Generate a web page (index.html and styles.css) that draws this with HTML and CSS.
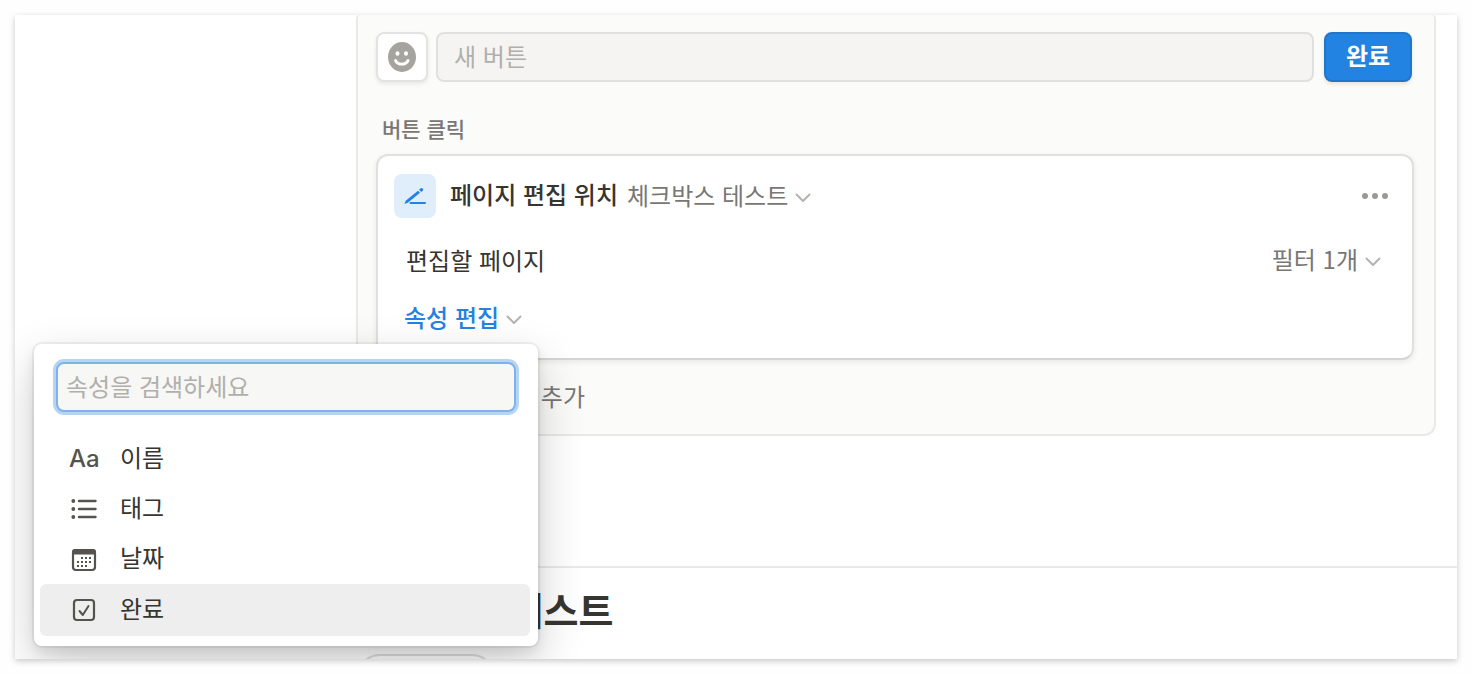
FILE: index.html
```html
<!DOCTYPE html>
<html lang="ko">
<head>
    <meta charset="UTF-8">
    <meta name="viewport" content="width=device-width, initial-scale=1.0">
    <title>체크박스 테스트</title>
    <link rel="stylesheet" href="styles.css">
</head>
<body>
    <div class="window">
        <main class="content">
            <section class="panel">
                <div class="name-row">
                    <button class="emoji-button" type="button" aria-label="아이콘">
                        <svg width="28" height="30" viewBox="0 0 28 30">
                            <ellipse cx="14" cy="15" rx="14" ry="15" fill="#a5a49f"/>
                            <ellipse cx="9.5" cy="11.5" rx="2" ry="2.3" fill="#fff"/>
                            <ellipse cx="18" cy="11.5" rx="2" ry="2.3" fill="#fff"/>
                            <path d="M7.500 18.500c1.500 3 3.700 3.700 6.300 3.700s4.800-.7 6.300-3.700" fill="none" stroke="#fff" stroke-width="2.800" stroke-linecap="round"/>
                        </svg>
                    </button>
                    <input class="name-input" type="text" placeholder="새 버튼" aria-label="버튼 이름">
                    <button class="done-button" type="button">완료</button>
                </div>

                <h2 class="label">버튼 클릭</h2>

                <div class="card">
                    <div class="card-row">
                        <span class="edit-icon">
                            <svg width="24" height="20" viewBox="0 0 24 20">
                                <path d="M1.500 18 2.700 14.800 15 4.800 17 6.800 4.800 16.800z" fill="#2383e2"/>
                                <path d="M16 3.800 17.500 2.500a1.600 1.600 0 0 1 2.300 2.200L18.200 6z" fill="#2383e2"/>
                                <path d="M7.500 17h14.500" stroke="#2383e2" stroke-width="2" stroke-linecap="round"/>
                            </svg>
                        </span>
                        <strong class="action-name">페이지 편집 위치</strong>
                        <button class="picker" type="button"><span>체크박스 테스트</span>
                            <svg class="chevron" width="16" height="10" viewBox="0 0 16 10"><path d="M1.500 1.500 8 8l6.500-6.500"/></svg>
                        </button>
                        <button class="more" type="button" aria-label="더 보기">
                            <svg width="26" height="6" viewBox="0 0 26 6" fill="#9b9a97">
                                <circle cx="3" cy="3" r="3"/><circle cx="13" cy="3" r="3"/><circle cx="23" cy="3" r="3"/>
                            </svg>
                        </button>
                    </div>
                    <div class="card-row pages-row">
                        <span>편집할 페이지</span>
                        <button class="picker filter" type="button"><span>필터 1개</span>
                            <svg class="chevron" width="16" height="10" viewBox="0 0 16 10"><path d="M1.500 1.500 8 8l6.500-6.500"/></svg>
                        </button>
                    </div>
                    <div class="card-row props-row">
                        <button class="picker props" type="button"><span>속성 편집</span>
                            <svg class="chevron" width="16" height="10" viewBox="0 0 16 10"><path d="M1.500 1.500 8 8l6.500-6.500"/></svg>
                        </button>
                    </div>
                </div>

                <button class="add-action" type="button">
                    <svg width="24" height="24" viewBox="0 0 24 24"><path d="M12 4v16M4 12h16" stroke="#787774" stroke-width="2"/></svg>
                    새로운 작업 추가
                </button>
            </section>

            <section class="database">
                <h1>체크박스 테스트</h1>
                <div class="tab"></div>
            </section>
        </main>

        <div class="menu">
            <input class="search" type="text" placeholder="속성을 검색하세요" aria-label="속성 검색">
            <ul class="menu-list">
                <li><button type="button">
                    <span class="menu-icon text-icon">Aa</span>
                    <span class="menu-text">이름</span>
                </button></li>
                <li><button type="button">
                    <svg class="menu-icon" width="30" height="28" viewBox="0 0 30 28">
                        <g fill="#55534e"><circle cx="4.300" cy="6" r="1.900"/><circle cx="4.300" cy="14" r="1.900"/><circle cx="4.300" cy="22" r="1.900"/></g>
                        <path d="M10 6h16.500M10 14h16.500M10 22h16.500" stroke="#55534e" stroke-width="2.400" stroke-linecap="round"/>
                    </svg>
                    <span class="menu-text">태그</span>
                </button></li>
                <li><button type="button">
                    <svg class="menu-icon" width="30" height="28" viewBox="0 0 30 28">
                        <rect x="4" y="5" width="22" height="20" rx="3" fill="none" stroke="#55534e" stroke-width="2.200"/>
                        <path d="M3 9.500V7a3 3 0 0 1 3-3h18a3 3 0 0 1 3 3v2.500z" fill="#55534e"/>
                        <path d="M12 13h10M8 17h14M8 21h10" stroke="#55534e" stroke-width="2" stroke-dasharray="2 2"/>
                    </svg>
                    <span class="menu-text">날짜</span>
                </button></li>
                <li><button class="active" type="button">
                    <svg class="menu-icon" width="30" height="28" viewBox="0 0 30 28" fill="none" stroke="#55534e" stroke-width="2.200">
                        <rect x="5" y="4" width="20" height="20" rx="3"/>
                        <path d="M10.500 15l3.300 4 5.700-9" stroke-width="2" stroke-linecap="round" stroke-linejoin="round"/>
                    </svg>
                    <span class="menu-text">완료</span>
                </button></li>
            </ul>
        </div>
    </div>
</body>
</html>
```
FILE: styles.css
```css
* {
    box-sizing: border-box;
}
body {
    margin: 0;
    padding: 15px;
    background-color: #fefefe;
    color: #37352f;
    font-family: "Noto Sans CJK KR", sans-serif;
    font-size: 24px;
    line-height: 36px;
}
button, input {
    font: inherit;
    color: inherit;
}
button {
    padding: 0;
    border: none;
    background: none;
    cursor: pointer;
}
.window {
    position: relative;
    height: calc(100vh - 30px);
    overflow: hidden;
    background-color: white;
    box-shadow: 0 2px 6px rgba(0, 0, 0, 0.22);
}
.content {
    padding-left: 341px;
}

/* Button editor */
.panel {
    margin-right: 21px;
    padding: 17px 20px 18px 18px;
    border: 2px solid #e9e9e7;
    border-top: none;
    border-radius: 4px 4px 12px 12px;
    background-color: #fbfbf9;
}
.name-row {
    display: flex;
    margin-right: 2px;
}
.emoji-button {
    display: flex;
    align-items: center;
    justify-content: center;
    width: 52px;
    height: 50px;
    margin-right: 8px;
    border: 2px solid #e3e3e1;
    border-radius: 8px;
    background-color: white;
    box-shadow: 0 2px 4px rgba(0, 0, 0, 0.08);
}
.name-input {
    flex: 1;
    min-width: 0;
    height: 50px;
    margin-right: 10px;
    padding: 0 16px 4px;
    border: 2px solid #e0e0de;
    border-radius: 8px;
    background-color: #f5f4f2;
}
input::placeholder {
    color: #b0afab;
    opacity: 1;
}
.done-button {
    width: 88px;
    height: 50px;
    padding-bottom: 4px;
    border: 2px solid #2076cb;
    border-radius: 8px;
    background-color: #2383e2;
    color: white;
    font-weight: 700;
    box-shadow: 0 2px 4px rgba(0, 0, 0, 0.1);
}
.label {
    margin: 30px 0 10px 6px;
    color: #787774;
    font-size: 21px;
    font-weight: 500;
    line-height: 32px;
}
.card {
    height: 206px;
    padding: 18px 24px 18px 16px;
    border: 2px solid #e0e0de;
    border-bottom-color: #d5d5d3;
    border-radius: 12px;
    background-color: white;
    box-shadow: 0 2px 6px rgba(0, 0, 0, 0.08);
}
.card-row {
    display: flex;
    align-items: center;
    height: 44px;
}
.edit-icon {
    display: flex;
    align-items: center;
    justify-content: center;
    width: 42px;
    height: 44px;
    margin-right: 14px;
    border-radius: 8px;
    background-color: #e0edfb;
}
.action-name {
    margin-right: 9px;
    padding-bottom: 4px;
    font-weight: 500;
}
.picker {
    display: flex;
    align-items: center;
    gap: 7px;
    color: #787774;
}
.picker span {
    padding-bottom: 2px;
}
.chevron {
    margin-top: 4px;
    fill: none;
    stroke: #b3b3b0;
    stroke-width: 2;
    stroke-linecap: round;
    stroke-linejoin: round;
}
.more {
    display: flex;
    margin-left: auto;
}
.pages-row {
    margin-top: 20px;
    padding: 0 7px 0 12px;
}
.filter {
    margin-left: auto;
}
.props-row {
    margin-top: 14px;
    padding-left: 10px;
}
.props {
    color: #2383e2;
    font-weight: 500;
}
.add-action {
    display: flex;
    align-items: center;
    gap: 8px;
    margin: 18px 0 2px 9px;
    color: #787774;
}

/* Database below the button */
.database {
    margin-top: 130px;
    border-top: 2px solid #e9e9e7;
}
.database h1 {
    margin: 0 0 0 2px;
    padding: 12px 0 16px;
    font-size: 38px;
    font-weight: 700;
    line-height: 58px;
}
.tab {
    width: 140px;
    height: 48px;
    border: 2px solid #dededc;
    border-radius: 24px;
}

/* Property menu */
.menu {
    position: absolute;
    top: 329px;
    left: 19px;
    width: 504px;
    padding: 18px 8px 10px 6px;
    border-radius: 8px;
    background-color: white;
    box-shadow: 0 0 0 2px rgba(15, 15, 15, 0.05), 0 6px 12px rgba(15, 15, 15, 0.1), 0 18px 48px rgba(15, 15, 15, 0.2);
}
.search {
    display: block;
    width: 460px;
    height: 50px;
    margin: 0 0 22px 16px;
    padding: 0 8px 4px;
    border: 2px solid #7fb2ec;
    border-radius: 8px;
    outline: none;
    background-color: #f7f7f5;
    box-shadow: 0 0 0 3px #b7d4f5;
}
.menu-list {
    margin: 0;
    padding: 0;
    list-style-type: none;
}
.menu-list button {
    display: flex;
    align-items: center;
    width: 100%;
    height: 50px;
    padding-left: 29px;
    border-radius: 6px;
}
.menu-list button:hover,
.menu-list .active {
    background-color: #eeeeee;
}
.menu-list .active {
    height: 52px;
}
.menu-icon {
    width: 30px;
    margin-right: 21px;
}
.menu-text {
    padding-bottom: 4px;
}
.text-icon {
    color: #55534e;
    font-family: Inter, sans-serif;
    font-weight: 500;
}
```
